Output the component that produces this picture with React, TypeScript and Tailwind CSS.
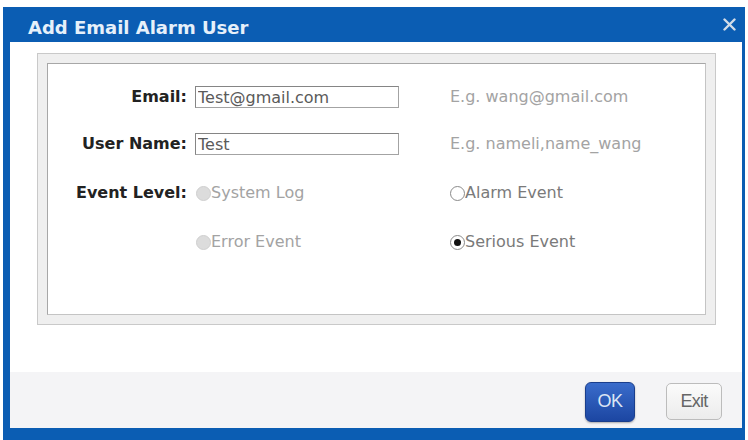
import React from 'react';

type RadioState = 'disabled' | 'off' | 'on';

const Radio: React.FC<{ label: string; state: RadioState }> = ({ label, state }) => {
    return (
        <label className="flex h-[22px] items-center">
            {state === 'disabled' && (
                <span className="h-[15px] w-[15px] shrink-0 rounded-full border border-[#cfcfcf] bg-[#dcdcdc]" />
            )}
            {state === 'off' && (
                <span className="h-[15px] w-[15px] shrink-0 rounded-full border-[1.5px] border-[#8a8a8a] bg-white" />
            )}
            {state === 'on' && (
                <span className="flex h-[15px] w-[15px] shrink-0 items-center justify-center rounded-full border-[1.5px] border-[#8a8a8a] bg-white">
                    <span className="h-[7px] w-[7px] rounded-full bg-[#111]" />
                </span>
            )}
            <span className={state === 'disabled' ? 'text-[#a3a3a3]' : 'text-[#7a7a7a]'}>{label}</span>
        </label>
    );
};

const FieldRow: React.FC<{ label: string; value: string; hint: string; className: string }> = ({
    label,
    value,
    hint,
    className,
}) => (
    <div className={`grid h-[22px] grid-cols-[147px_255px_1fr] items-center ${className}`}>
        <span className="pr-[8px] text-right font-bold text-[#222]">{label}</span>
        <input
            readOnly
            defaultValue={value}
            className="h-[22px] w-[204px] border border-[#858585] border-b-[#a3a3a3] border-r-[#a3a3a3] bg-white px-[2px] text-[16px] leading-[20px] text-[#5a5a5a] outline-none"
        />
        <span className="text-[#a3a3a3]">{hint}</span>
    </div>
);

export default function App() {
    return (
        <div className="h-[440px] w-[748px] overflow-hidden bg-white pl-[3px] pt-[7px] font-['DejaVu_Sans',Verdana,sans-serif] text-[16px]">
            <div className="flex h-[433px] w-[742px] flex-col bg-[#0b5db3] pb-[12px] pl-[7px] pr-[3px]">
                {/* title bar */}
                <div className="flex h-[35px] shrink-0 items-start justify-between pl-[18px] pr-[6px] pt-[10px]">
                    <span className="text-[18px] font-bold leading-[21px] text-[#e6f0fa]">Add Email Alarm User</span>
                    <svg width="13" height="13" viewBox="0 0 13 13" className="mt-[1px]">
                        <path d="M1.5 1.5 L11.5 11.5 M11.5 1.5 L1.5 11.5" stroke="#d2dce8" strokeWidth="2.4" strokeLinecap="round" />
                    </svg>
                </div>

                {/* body */}
                <div className="h-[330px] shrink-0 bg-white pl-[27px] pt-[11px]">
                    <div className="h-[272px] w-[679px] border border-[#c9c9c9] bg-[#efefef] p-[9px]">
                        <div className="flex h-full flex-col border border-[#a7a7a7] border-b-[#c4c4c4] border-r-[#c4c4c4] bg-white">
                            <FieldRow
                                className="mt-[21px]"
                                label="Email:"
                                value="Test@gmail.com"
                                hint="E.g. wang@gmail.com"
                            />
                            <FieldRow
                                className="mt-[25px]"
                                label="User Name:"
                                value="Test"
                                hint="E.g. nameli,name_wang"
                            />
                            <div className="mt-[27px] grid h-[22px] grid-cols-[147px_255px_1fr] items-center">
                                <span className="pr-[8px] text-right font-bold text-[#222]">Event Level:</span>
                                <div className="pl-[1px]">
                                    <Radio label="System Log" state="disabled" />
                                </div>
                                <Radio label="Alarm Event" state="off" />
                            </div>
                            <div className="mt-[28px] grid h-[22px] grid-cols-[147px_255px_1fr] items-center">
                                <span />
                                <div className="pl-[1px]">
                                    <Radio label="Error Event" state="disabled" />
                                </div>
                                <Radio label="Serious Event" state="on" />
                            </div>
                        </div>
                    </div>
                </div>

                {/* footer buttons */}
                <div className="flex h-[56px] shrink-0 items-center justify-end gap-[31px] bg-[#f4f4f6] pr-[20px] pt-[3px] font-['Liberation_Sans',Arial,sans-serif]">
                    <button className="h-[40px] w-[50px] rounded-[6px] border border-[#1a3e8c] bg-gradient-to-b from-[#3a6ccb] to-[#1c46a2] text-[18px] tracking-[-0.5px] text-[#dbe5f4] shadow-[0_1px_2px_rgba(0,0,0,0.3)]">
                        OK
                    </button>
                    <button className="h-[37px] w-[56px] rounded-[5px] border border-[#bcbcbc] bg-gradient-to-b from-[#fbfbfb] to-[#ececec] text-[18px] tracking-[-0.8px] text-[#666]">
                        Exit
                    </button>
                </div>
            </div>
        </div>
    );
}
